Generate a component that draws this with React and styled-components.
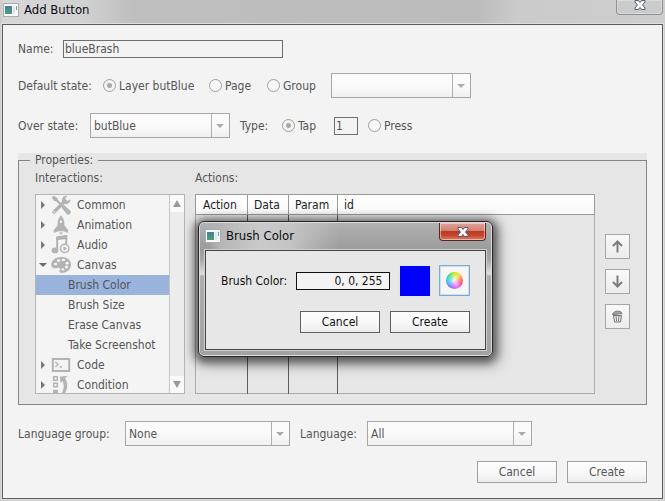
import React, { useState } from "react";
import styled, { createGlobalStyle, css } from "styled-components";

const GlobalStyle = createGlobalStyle`
  *, *::before, *::after { box-sizing: border-box; }
  body {
    margin: 0;
    background: #f3f3f3;
    color: #555;
    font: 12px/16px "DejaVu Sans Condensed", "DejaVu Sans", Tahoma, sans-serif;
  }
  button, input, select { font: inherit; color: inherit; margin: 0; }
`;

const Frame = styled.div`
  position: relative;
  display: flex;
  flex-direction: column;
  min-height: 100vh;
  padding: 0 2px 2px 2px;
  background: #cdcdcd;
`;

const TitleBar = styled.header`
  display: flex;
  align-items: flex-start;
  height: 24px;
  padding: 0 0 0 1px;
  background:
    linear-gradient(to right, #d6d6d6 0, #d2d2d2 80px, transparent 130px),
    linear-gradient(to right, #bfbfbf 0, #bcbcbc 72%, #cbcbcb 78%, #cecece 100%);

  > svg { margin-top: 3px; }
`;

const Title = styled.h1`
  flex: 1;
  margin: 0;
  padding: 1px 0 0 5px;
  color: #0a0a14;
  font-size: 13px;
  font-weight: 400;
  line-height: 17px;
`;

const CloseButton = styled.button`
  display: flex;
  align-items: flex-start;
  justify-content: center;
  width: 47px;
  height: 15px;
  padding: 0;
  border: 1px solid #8d9094;
  border-top: 0;
  border-radius: 0 0 4px 4px;
  background: #cbcbcb;
  box-shadow: inset 0 0 0 1px #dadada;
`;

const Client = styled.main`
  flex: 1;
  display: flex;
  flex-direction: column;
  padding: 15px 15px 14px 15px;
  border: 1px solid #5c5c5c;
  background: #f3f3f3;
  box-shadow: 0 0 0 1px #dedede;
`;

const Row = styled.div`
  display: flex;
  align-items: center;
  height: 25px;
  margin-bottom: 15px;
`;

const NameRow = styled(Row)`
  height: 18px;
`;

const FieldLabel = styled.label`
  min-width: ${(p) => p.$width || 0}px;
  padding-left: ${(p) => p.$inset || 0}px;
  white-space: nowrap;
`;

const TextInput = styled.input`
  width: ${(p) => p.$width}px;
  height: 18px;
  padding: 0 1px;
  border: 1px solid #6f6f6f;
  border-radius: 0;
  background: #f3f3f3;
  outline: 0;
`;

const SelectBox = styled.span`
  position: relative;
  display: block;
  width: ${(p) => p.$width}px;
  height: 25px;

  &::before {
    content: "";
    position: absolute;
    top: 1px;
    right: 18px;
    bottom: 1px;
    width: 1px;
    background: #b0b0b0;
    pointer-events: none;
  }

  &::after {
    content: "";
    position: absolute;
    top: 11px;
    right: 6px;
    border: solid transparent;
    border-width: 4px 4px 0;
    border-top-color: #ababab;
    pointer-events: none;
  }
`;

const Select = styled.select`
  appearance: none;
  width: 100%;
  height: 100%;
  padding: 0 22px 0 3px;
  border: 1px solid #a6a6a6;
  border-radius: 0;
  background: linear-gradient(#fbfbfb, #fafafa 50%, #f0f0f0);
  outline: 0;
`;

const RadioLabel = styled.label`
  display: flex;
  align-items: center;
  gap: 3px;
  width: ${(p) => p.$width}px;
  white-space: nowrap;
`;

const Radio = styled.input`
  appearance: none;
  flex: none;
  width: 13px;
  height: 13px;
  border: 1px solid #9e9e9e;
  border-radius: 50%;
  background: #f8f8f8;

  &:checked {
    background: radial-gradient(circle, #a8a8a8 0 2px, #f4f4f4 3px);
  }
`;

const TapInput = styled(TextInput)`
  margin-right: 10px;
`;

const PropertiesPanel = styled.section`
  background: #e6e6e6;
`;

const Fieldset = styled.fieldset`
  min-width: 0;
  margin: 0;
  padding: 2px 16px 10px 16px;
  border: 1px solid #858585;
`;

const Legend = styled.legend`
  margin-left: -5px;
  padding: 0 5px;
  line-height: 14px;
`;

const PanelGrid = styled.div`
  display: grid;
  grid-template-columns: 150px minmax(0, 1fr) 25px;
  column-gap: 10px;
`;

const Heading = styled.h2`
  margin: 0;
  height: 25px;
  font-size: 12px;
  font-weight: 400;
  line-height: 18px;
`;

const List = styled.div`
  display: flex;
  height: 200px;
  border: 1px solid #b4b4b4;
  background: #f4f4f4;
  overflow: hidden;
`;

const TreeRows = styled.ul`
  flex: 1;
  margin: 0;
  padding: 0;
  list-style: none;
`;

const TreeItem = styled.li`
  display: flex;
  align-items: center;
  height: 20px;
  padding-left: ${(p) => (p.$child ? 32 : 5)}px;
  white-space: nowrap;
  ${(p) => p.$selected && css`background: #99b3dd;`}
`;

const Expander = styled.button`
  display: flex;
  align-items: center;
  width: 10px;
  height: 12px;
  padding: 0;
  border: 0;
  background: none;

  &::before {
    content: "";
    border: solid transparent;
    ${(p) => p.$open
      ? css`border-width: 4px 4px 0; border-top-color: #6b6b6b; margin-left: -2px;`
      : css`border-width: 4px 0 4px 4px; border-left-color: #777;`}
  }
`;

const TreeIcon = styled.svg`
  flex: none;
  width: 20px;
  height: 20px;
  margin-right: 6px;
`;

const ScrollBar = styled.div`
  display: flex;
  flex-direction: column;
  justify-content: space-between;
  width: 15px;
  border-left: 1px solid #c4c4c4;
  background: #ececec;
`;

const ScrollButton = styled.button`
  display: flex;
  align-items: center;
  justify-content: center;
  height: 17px;
  padding: 0;
  border: 0;
  background: #fafafa;

  &::before {
    content: "";
    border: solid transparent;
    ${(p) => p.$down
      ? css`border-width: 7px 4px 0; border-top-color: #9a9a9a;`
      : css`border-width: 0 4px 7px; border-bottom-color: #9a9a9a;`}
  }
`;

const Table = styled.table`
  width: 100%;
  height: 200px;
  table-layout: fixed;
  border-collapse: collapse;
  border: 1px solid #ababab;
  color: #1c1c1c;

  th {
    height: 20px;
    padding: 0 0 0 6px;
    border: 1px solid #9a9a9a;
    background: linear-gradient(#fff, #f8f8f8);
    font-weight: 400;
    text-align: left;
  }
  th:first-child { padding-left: 7px; }
  td {
    padding: 0;
    border-left: 1px solid #5e5e5e;
  }
  td:first-child { border-left-color: #ababab; }
`;

const Col = styled.col`
  width: ${(p) => p.$width}px;
`;

const ToolColumn = styled.div`
  display: flex;
  flex-direction: column;
  gap: 10px;
  padding-top: 40px;
`;

const ToolButton = styled.button`
  display: flex;
  align-items: center;
  justify-content: center;
  width: 25px;
  height: 25px;
  padding: 0;
  border: 1px solid #a6a6a6;
  background: linear-gradient(#f9f9f9, #ececec);
`;

const LanguageRow = styled(Row)`
  margin-top: 16px;
`;

const Actions = styled.div`
  display: flex;
  justify-content: flex-end;
  gap: 10px;
`;

const PushButton = styled.button`
  width: 80px;
  height: 22px;
  padding: 0;
  border: 1px solid ${(p) => (p.$strong ? "#5f5f5f" : "#a0a0a0")};
  background: linear-gradient(#fdfdfd, #f9f9f9 50%, #ededed);
  color: ${(p) => (p.$strong ? "#111" : "#555")};
  line-height: 18px;
`;

const Overlay = styled.div`
  position: absolute;
  inset: 0;
  display: flex;
  align-items: center;
  justify-content: center;
  padding: 77px 0 0 26px;
  pointer-events: none;
`;

const Dialog = styled.section`
  width: 295px;
  padding: 1px 6px 6px;
  border: 1px solid #262626;
  border-radius: 6px;
  background:
    linear-gradient(to right, transparent 10px, #b4b4b4 20px, #cacaca 60px, #c4c4c4 90px, transparent 140px) 0 0 / 100% 27px no-repeat,
    linear-gradient(#b2b2b2 0, #9c9c9c 27px, #a8a8a8 38px, #e0e0e0 52px, #aeaeae 54px, #a2a2a2 100%);
  box-shadow: inset 0 0 0 1px #dcdcdc, 0 2px 9px 4px rgba(0, 0, 0, 0.5), 3px 4px 14px 4px rgba(0, 0, 0, 0.25);
  color: #111;
  pointer-events: auto;
`;

const DialogBar = styled.header`
  display: flex;
  align-items: flex-start;
  height: 27px;

  > svg { margin-top: 6px; }
  ${Title} { padding-top: 4px; }
`;

const RedClose = styled(CloseButton)`
  align-items: center;
  height: 18px;
  border-color: #552a26;
  background: linear-gradient(#dfa399 0, #d0806f 45%, #bb3a24 50%, #c8482f 75%, #de8468 100%);
  box-shadow: inset 0 0 0 1px rgba(255, 235, 230, 0.5);
`;

const DialogBody = styled.div`
  padding: 14px 15px 16px;
  border: 1px solid #444;
  background: #e7e7e7;
  box-shadow: 0 0 0 1px #cfcfcf;
`;

const ColorRow = styled.div`
  display: flex;
  align-items: center;
  justify-content: space-between;
  margin-bottom: 15px;
`;

const ColorInput = styled(TextInput)`
  padding-right: 7px;
  border-color: #111;
  text-align: right;
`;

const Swatch = styled.span`
  width: 30px;
  height: 30px;
  background: #0000fe;
`;

const PickerButton = styled.button`
  display: flex;
  align-items: center;
  justify-content: center;
  width: 31px;
  height: 31px;
  padding: 0;
  border: 1px solid #7fa9cf;
  background: #f6f6f6;
  box-shadow: inset 0 0 0 1px #c9dff2;
`;

const Wheel = styled.span`
  width: 17px;
  height: 17px;
  border-radius: 50%;
  background:
    radial-gradient(circle, rgba(255, 255, 255, 0.9) 0, rgba(255, 255, 255, 0) 75%),
    conic-gradient(#c8e800, #ffd020 40deg, #ff6030 80deg, #ff3070 110deg, #f050f0 155deg, #7060ff 210deg, #20b0f0 260deg, #20d0a0 300deg, #50dc40 330deg, #c8e800);
`;

function AppIcon() {
  return (
    <svg width="16" height="14" viewBox="0 0 16 14" aria-hidden="true">
      <defs>
        <linearGradient id="pane" x1="0" y1="0" x2="0" y2="1">
          <stop offset="0" stopColor="#4a7c9c" />
          <stop offset="1" stopColor="#4ba070" />
        </linearGradient>
      </defs>
      <rect x="0.5" y="0.5" width="15" height="13" fill="#f7f9fb" stroke="#a5aeb6" />
      <rect x="2" y="3" width="7" height="8" fill="url(#pane)" />
      <rect x="10" y="3" width="2" height="8" fill="#dce4ee" />
      <rect x="13" y="3" width="1" height="4" fill="#67a58c" />
    </svg>
  );
}

function CloseGlyph() {
  return (
    <svg width="12" height="10" viewBox="0 0 12 10" aria-hidden="true">
      <path
        d="M1 0.5H4.5L6 2.5L7.5 0.5H11V2L8.5 5L11 8V9.5H7.5L6 7.5L4.5 9.5H1V8L3.5 5L1 2Z"
        fill="#fafafa"
        stroke="#515875"
        strokeWidth="1"
      />
    </svg>
  );
}

const GREY = "#b3b3b3";

const treeIcons = {
  tools: (
    <>
      <path d="M3 17L13 7" stroke={GREY} strokeWidth="3.4" strokeLinecap="round" />
      <path d="M19.4 4.2L16.4 6L14.2 3.8L16.2 0.8A4.6 4.6 0 0 0 11.2 7L13 8.8A4.6 4.6 0 0 0 19.4 4.2Z" fill={GREY} />
      <path d="M0.6 2.6L2.6 0.8L6.4 3L6.9 5L11 9L9.4 10.6L5.3 6.4L3.2 6.1Z" fill={GREY} />
      <path d="M11 11.2L12.6 9.8L19 15.6A2.2 2.2 0 0 1 15.6 18.8L10.6 12.8Z" fill={GREY} />
      <circle cx="3.2" cy="16.8" r="0.8" fill="#f4f4f4" />
    </>
  ),
  rocket: (
    <>
      <path d="M10 0.5C12.3 2.6 13.3 5 13.3 8V10.2L17.2 15V18L12.6 16.2H7.4L2.8 18V15L6.7 10.2V8C6.7 5 7.7 2.6 10 0.5Z" fill={GREY} />
      <circle cx="10" cy="6.8" r="1.3" fill="#f4f4f4" />
      <path d="M7.8 17.4H12.2L10 19.8Z" fill={GREY} />
    </>
  ),
  audio: (
    <>
      <path d="M6.2 14.6V2.4L15.2 1V9" fill="none" stroke={GREY} strokeWidth="2" />
      <path d="M5.4 1.8L16.2 0.4V4L5.4 5.2Z" fill={GREY} />
      <ellipse cx="4" cy="15.4" rx="3.4" ry="2.9" fill={GREY} />
      <circle cx="13.7" cy="13.4" r="4.2" fill="#f4f4f4" stroke={GREY} strokeWidth="1.5" />
      <path d="M12.5 11.1L16 13.4L12.5 15.7Z" fill={GREY} />
    </>
  ),
  palette: (
    <>
      <path d="M10.4 2C16 2 20 5 20 9.4C20 14.6 15.6 17.8 10.8 17.8C8.6 17.8 8 16.3 8.7 14.9C9.4 13.4 8.3 12.5 6.6 13C3.2 14 0.2 12.9 0.2 10C0.2 5.4 4.8 2 10.4 2Z" fill={GREY} />
      <g fill="#f4f4f4">
        <ellipse cx="4.6" cy="9" rx="1.7" ry="1.3" />
        <ellipse cx="7.6" cy="5.6" rx="1.7" ry="1.3" />
        <ellipse cx="12.4" cy="5" rx="1.7" ry="1.3" />
        <ellipse cx="16.2" cy="8.2" rx="1.6" ry="1.4" />
        <ellipse cx="15.6" cy="12" rx="1.6" ry="1.4" />
        <ellipse cx="11.8" cy="14.4" rx="1.5" ry="1.2" />
      </g>
    </>
  ),
  code: (
    <>
      <rect x="1.8" y="4" width="16.4" height="12" fill="none" stroke={GREY} strokeWidth="2" />
      <path d="M4.4 7L7 9.4L4.4 11.8M8.8 12H11" fill="none" stroke={GREY} strokeWidth="1.3" />
    </>
  ),
  condition: (
    <>
      <path d="M2.7 1.7H6.3V5.3H2.7ZM2.7 8.2H6.3V11.8H2.7Z" fill="none" stroke={GREY} strokeWidth="1.4" />
      <path d="M2 14.8H7V19H2Z" fill={GREY} />
      <path d="M9 1.4L16.6 1L13.8 3.6C16.8 6.6 17.4 12.6 13.6 19H10.6C13.2 13.6 13.4 9.6 11.6 6L9.4 8Z" fill={GREY} />
    </>
  ),
};

const tree = [
  { label: "Common", icon: "tools" },
  { label: "Animation", icon: "rocket" },
  { label: "Audio", icon: "audio" },
  { label: "Canvas", icon: "palette", open: true },
  { label: "Brush Color", child: true },
  { label: "Brush Size", child: true },
  { label: "Erase Canvas", child: true },
  { label: "Take Screenshot", child: true },
  { label: "Code", icon: "code" },
  { label: "Condition", icon: "condition" },
];

function Dropdown({ id, width, value, label }) {
  return (
    <SelectBox $width={width}>
      <Select id={id} defaultValue={value} aria-label={label}>
        <option>{value}</option>
      </Select>
    </SelectBox>
  );
}

function RadioOption({ name, label, width, checked }) {
  return (
    <RadioLabel $width={width}>
      <Radio type="radio" name={name} defaultChecked={checked} />
      {label}
    </RadioLabel>
  );
}

function Interactions() {
  const [selected, setSelected] = useState("Brush Color");
  return (
    <List>
      <TreeRows>
        {tree.map((item) => (
          <TreeItem
            key={item.label}
            $child={item.child}
            $selected={item.label === selected}
            onClick={() => setSelected(item.label)}
          >
            {!item.child && <Expander $open={item.open} aria-label={`Toggle ${item.label}`} />}
            {item.icon && (
              <TreeIcon viewBox="0 0 20 20" aria-hidden="true">
                {treeIcons[item.icon]}
              </TreeIcon>
            )}
            {item.label}
          </TreeItem>
        ))}
      </TreeRows>
      <ScrollBar>
        <ScrollButton aria-label="Scroll up" />
        <ScrollButton $down aria-label="Scroll down" />
      </ScrollBar>
    </List>
  );
}

function ActionTable() {
  return (
    <Table>
      <colgroup>
        <Col $width={52} />
        <Col $width={41} />
        <Col $width={49} />
        <col />
      </colgroup>
      <thead>
        <tr><th>Action</th><th>Data</th><th>Param</th><th>id</th></tr>
      </thead>
      <tbody>
        <tr><td /><td /><td /><td /></tr>
      </tbody>
    </Table>
  );
}

function ToolButtons() {
  return (
    <ToolColumn>
      <ToolButton aria-label="Move up">
        <svg width="13" height="13" viewBox="0 0 13 13" fill="none" stroke="#7c7c7c" strokeWidth="2">
          <path d="M6.5 12.5V2M2 6L6.5 1.5L11 6" />
        </svg>
      </ToolButton>
      <ToolButton aria-label="Move down">
        <svg width="13" height="13" viewBox="0 0 13 13" fill="none" stroke="#7c7c7c" strokeWidth="2">
          <path d="M6.5 0.5V11M2 7L6.5 11.5L11 7" />
        </svg>
      </ToolButton>
      <ToolButton aria-label="Delete">
        <svg width="13" height="13" viewBox="0 0 13 13" fill="none" stroke="#747474">
          <path d="M1.5 4.5C2 2.5 4 1.2 6.5 1.2S10.5 2 11 3.5L1.5 4.5Z" fill="#a5a5a5" />
          <path d="M2.5 5L3.5 12H9.5L10.5 5M5 5.5L5.5 11M8 5.5L7.5 11M3 5.5H10" />
        </svg>
      </ToolButton>
    </ToolColumn>
  );
}

function BrushColorDialog() {
  return (
    <Overlay>
      <Dialog role="dialog" aria-labelledby="brush-title">
        <DialogBar>
          <AppIcon />
          <Title as="h2" id="brush-title">Brush Color</Title>
          <RedClose aria-label="Close dialog"><CloseGlyph /></RedClose>
        </DialogBar>
        <DialogBody>
          <ColorRow>
            <FieldLabel htmlFor="brush-color">Brush Color:</FieldLabel>
            <ColorInput id="brush-color" $width={94} defaultValue="0, 0, 255" />
            <Swatch />
            <PickerButton aria-label="Pick color"><Wheel /></PickerButton>
          </ColorRow>
          <Actions>
            <PushButton $strong>Cancel</PushButton>
            <PushButton $strong>Create</PushButton>
          </Actions>
        </DialogBody>
      </Dialog>
    </Overlay>
  );
}

export default function App() {
  return (
    <>
      <GlobalStyle />
      <Frame>
        <TitleBar>
          <AppIcon />
          <Title>Add Button</Title>
          <CloseButton aria-label="Close window"><CloseGlyph /></CloseButton>
        </TitleBar>
        <Client>
          <NameRow>
            <FieldLabel htmlFor="name" $width={45}>Name:</FieldLabel>
            <TextInput id="name" $width={220} defaultValue="blueBrash" />
          </NameRow>
          <Row>
            <FieldLabel as="span" $width={85}>Default state:</FieldLabel>
            <RadioOption name="default" label="Layer butBlue" width={106} checked />
            <RadioOption name="default" label="Page" width={58} />
            <RadioOption name="default" label="Group" width={64} />
            <Dropdown width={140} value="" label="Default state target" />
          </Row>
          <Row>
            <FieldLabel htmlFor="over" $width={72}>Over state:</FieldLabel>
            <Dropdown id="over" width={140} value="butBlue" />
            <FieldLabel as="span" $width={52} $inset={10}>Type:</FieldLabel>
            <RadioOption name="type" label="Tap" width={52} checked />
            <TapInput $width={24} defaultValue="1" aria-label="Tap count" />
            <RadioOption name="type" label="Press" width={64} />
          </Row>
          <PropertiesPanel>
            <Fieldset>
              <Legend>Properties:</Legend>
              <PanelGrid>
                <Heading>Interactions:</Heading>
                <Heading>Actions:</Heading>
                <span />
                <Interactions />
                <ActionTable />
                <ToolButtons />
              </PanelGrid>
            </Fieldset>
          </PropertiesPanel>
          <LanguageRow>
            <FieldLabel htmlFor="lang-group" $width={107}>Language group:</FieldLabel>
            <Dropdown id="lang-group" width={165} value="None" />
            <FieldLabel htmlFor="lang" $width={77} $inset={10}>Language:</FieldLabel>
            <Dropdown id="lang" width={165} value="All" />
          </LanguageRow>
          <Actions>
            <PushButton>Cancel</PushButton>
            <PushButton>Create</PushButton>
          </Actions>
        </Client>
        <BrushColorDialog />
      </Frame>
    </>
  );
}
